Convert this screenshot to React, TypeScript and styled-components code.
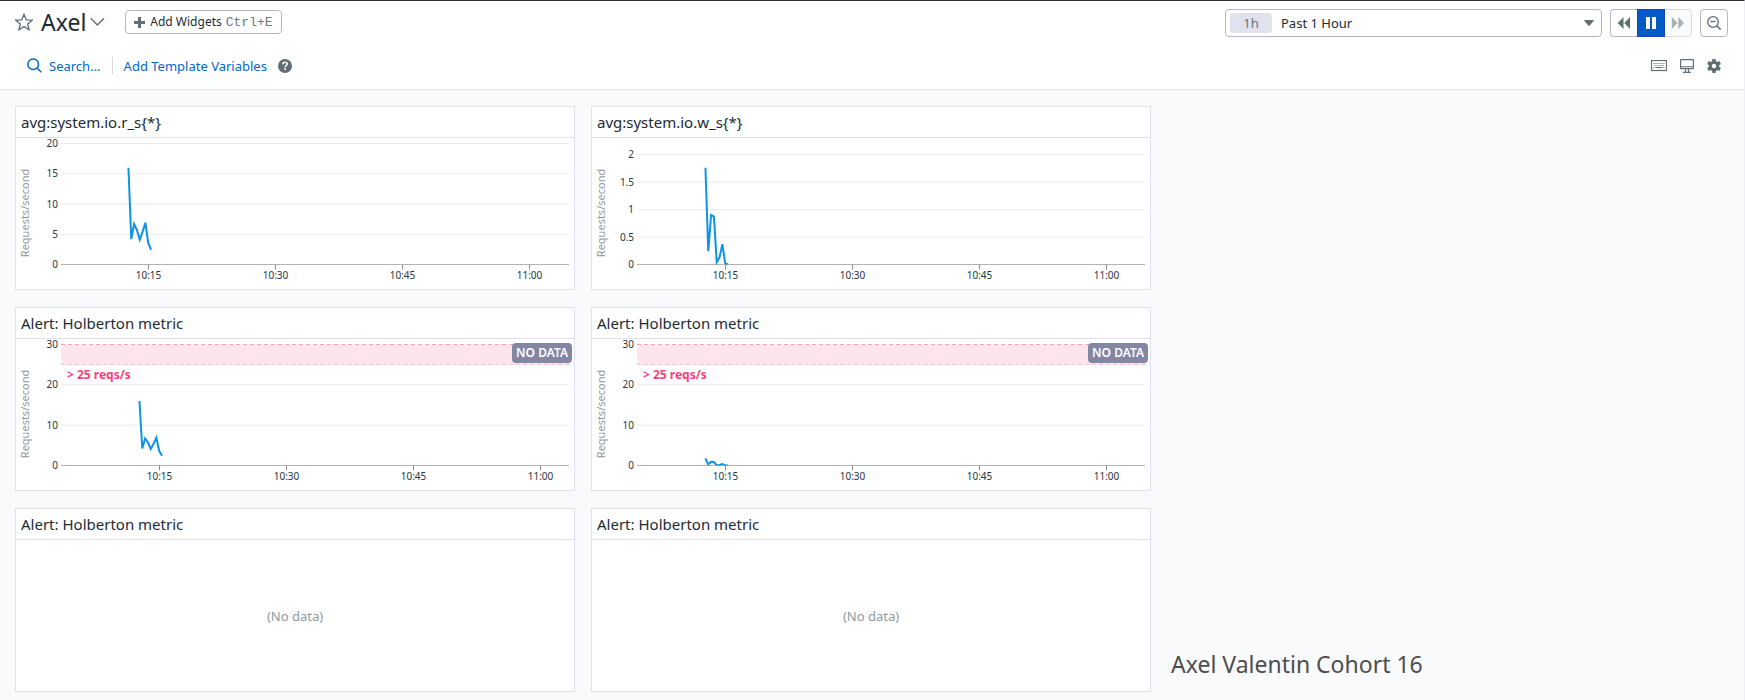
import React, { useId } from 'react';
import styled, { createGlobalStyle, css } from 'styled-components';

const GlobalStyle = createGlobalStyle`
  *, *::before, *::after { box-sizing: border-box; }
  body {
    margin: 0;
    background: #f9fafc;
    color: #1c2b34;
    font-family: 'Noto Sans', sans-serif;
    font-size: 13px;
    line-height: 20px;
  }
  button, select { font: inherit; color: inherit; }
`;

const Page = styled.div`
  min-height: 100vh;
  border-top: 1px solid #352f36;
  border-right: 1px solid #eeeef3;
`;

const Header = styled.header`
  background: #fff;
  border-bottom: 1px solid #e1e1ec;
`;

const Row = styled.div`
  display: flex;
  align-items: center;
  justify-content: space-between;
`;

const TitleRow = styled(Row)`
  height: 43px;
  padding: 0 16px 0 15px;
`;

const ToolRow = styled(Row)`
  height: 45px;
  padding: 0 23px 2px 27px;
`;

const Group = styled.div<{ $gap: number }>`
  display: flex;
  align-items: center;
  gap: ${({ $gap }) => $gap}px;
`;

const HeadingGroup = styled(Group)`
  padding-bottom: 1px;
`;

const Title = styled.h1`
  margin: 0;
  font-size: 23px;
  font-weight: 400;
  line-height: 30px;
`;

const PlainButton = styled.button`
  display: flex;
  align-items: center;
  padding: 0;
  border: 0;
  background: none;
  color: #5f6f75;
  cursor: pointer;
`;

const TitleMenu = styled.div`
  display: flex;
  align-items: center;
  gap: 4px;
`;

const AddWidgets = styled.button`
  display: flex;
  align-items: center;
  gap: 5px;
  height: 24px;
  margin-left: 12px;
  padding: 0 8px;
  border: 1px solid #b6b4cb;
  border-radius: 4px;
  background: #fff;
  font-size: 12px;
  line-height: 20px;
`;

const Shortcut = styled.kbd`
  padding-top: 1px;
  color: #6b797f;
  font-family: 'Liberation Mono', monospace;
  font-size: 13px;
`;

const Label = styled.span`
  display: flex;
  align-items: center;
  gap: 4px;
`;

const LinkButton = styled(PlainButton)`
  gap: 7px;
  color: #0069c8;
`;

const TextLink = styled.a`
  color: #0069c8;
  text-decoration: none;
`;

const Divider = styled.span`
  width: 1px;
  height: 17px;
  background: #d7d7e5;
`;

const TimeField = styled.div`
  display: flex;
  align-items: center;
  width: 377px;
  height: 28px;
  padding: 0 7px 0 4px;
  border: 1px solid #b6b4cb;
  border-radius: 4px;
  background: #fff;
`;

const TimeBadge = styled.label`
  width: 42px;
  height: 20px;
  border-radius: 4px;
  background: #e0e3ed;
  color: #66757b;
  text-align: center;
`;

const TimeSelect = styled.select`
  flex: 1;
  height: 26px;
  padding: 0 0 0 9px;
  border: 0;
  background: none;
  appearance: none;
`;

const ButtonStrip = styled.div`
  display: flex;
`;

const IconButton = styled.button<{ $kind?: 'active' | 'disabled' }>`
  display: flex;
  align-items: center;
  justify-content: center;
  width: 28px;
  height: 28px;
  padding: 0;
  border: 1px solid #b6b4cb;
  border-radius: 4px;
  background: #fff;
  color: #5f6f75;

  ${ButtonStrip} > & {
    width: 27px;
    border-radius: 4px 0 0 4px;
    border-right: 0;
  }

  ${({ $kind }) =>
    $kind === 'active' &&
    css`
      ${ButtonStrip} > & {
        width: 28px;
        border: 1px solid #1f3fc4;
        border-radius: 0;
        background: #005bc5;
        color: #fff;
      }
    `}

  ${({ $kind }) =>
    $kind === 'disabled' &&
    css`
      ${ButtonStrip} > & {
        border: 1px solid #dcdbe6;
        border-left: 0;
        border-radius: 0 4px 4px 0;
        background: #f9fafc;
        color: #aab2b5;
      }
    `}
`;

const Board = styled.main`
  display: grid;
  grid-template-columns: repeat(3, minmax(0, 1fr));
  gap: 17px 16px;
  padding: 16px 17px 8px 15px;
`;

const Card = styled.section<{ $column: number }>`
  display: flex;
  flex-direction: column;
  grid-column: ${({ $column }) => $column};
  min-height: 184px;
  border: 1px solid #e0e1ec;
  background: #fff;
`;

const CardTitle = styled.h2`
  margin: 0;
  padding: 4px 5px;
  border-bottom: 1px solid #e0e1ec;
  font-size: 15px;
  font-weight: 400;
  line-height: 22px;
`;

const CardBody = styled.div`
  position: relative;
  display: flex;
  flex: 1;
  align-items: center;
  justify-content: center;
`;

const EmptyText = styled.p`
  margin: 0;
  color: #8d999d;
`;

const StatusBadge = styled.span`
  position: absolute;
  top: 4px;
  right: 2px;
  width: 60px;
  border-radius: 4px;
  background: #8387a4;
  color: #fff;
  font-size: 12px;
  font-weight: 600;
  line-height: 20px;
  text-align: center;
`;

const Note = styled.p`
  grid-column: 3;
  align-self: end;
  margin: 0;
  padding: 0 4px 12px;
  color: #4d4d4d;
  font-size: 23px;
  line-height: 32px;
`;

const ChartSvg = styled.svg`
  display: block;
  width: 100%;
  height: 151px;
  overflow: visible;
`;

const Plot = styled.svg`
  width: calc(100% - 50px);
  overflow: visible;
`;

const AxisText = styled.text`
  fill: #27363e;
  font-size: 10px;
`;

const UnitText = styled.text`
  fill: #8d999d;
  font-size: 11px;
`;

const ThresholdText = styled.text`
  fill: #fa3f7c;
  font-size: 12px;
  font-weight: 700;
`;

const StarIcon = () => (
  <svg width="18" height="18" viewBox="0 0 18 18" fill="none" stroke="#5f6f75" strokeWidth="1.3" strokeLinejoin="miter">
    <path d="M9 1.2l2.2 5.6 6 .4-4.600 3.800 1.500 5.800L9 13.600l-5.100 3.200L5.400 11 .8 7.200l6-.4z" />
  </svg>
);

const ChevronIcon = () => (
  <svg width="15" height="10" viewBox="0 0 15 10" fill="none" stroke="#5f6f75" strokeWidth="1.4">
    <path d="M.8 1.3l6.6 6.8 6.6-6.8" />
  </svg>
);

const PlusIcon = () => (
  <svg width="11" height="11" viewBox="0 0 11 11" fill="#5f6f75">
    <path d="M4 0h3v4h4v3H7v4H4V7H0V4h4z" />
  </svg>
);

const SearchIcon = () => (
  <svg width="15" height="15" viewBox="0 0 15 15" fill="none" stroke="#0069c8" strokeWidth="1.5">
    <circle cx="6.2" cy="6.2" r="5.3" />
    <path d="M10 10l4.300 4.300" />
  </svg>
);

const HelpIcon = () => (
  <svg width="14" height="14" viewBox="0 0 14 14">
    <circle cx="7" cy="7" r="7" fill="#5f6f75" />
    <path d="M4.9 5.3c.1-1.3 1-2 2.2-2s2.1.7 2.1 1.8c0 1.5-2.1 1.5-2.1 3.1" fill="none" stroke="#fff" strokeWidth="1.6" />
    <rect x="6.2" y="9.2" width="1.8" height="1.8" fill="#fff" />
  </svg>
);

const CaretIcon = () => (
  <svg width="10" height="6" viewBox="0 0 10 6" fill="#5f6f75">
    <path d="M.3 0h9.4v.8L5.9 5.2a1.2 1.2 0 0 1-1.8 0L.3.8z" />
  </svg>
);

const RewindIcon = () => (
  <svg width="14" height="12" viewBox="0 0 14 12" fill="currentColor">
    <path d="M6.5 0v12L.8 6zM13 0v12L7.2 6z" />
  </svg>
);

const ForwardIcon = () => (
  <svg width="14" height="12" viewBox="0 0 14 12" fill="currentColor">
    <path d="M.8 0v12L6.6 6zM7.3 0v12L13 6z" />
  </svg>
);

const PauseIcon = () => (
  <svg width="12" height="12" viewBox="0 0 12 12" fill="currentColor">
    <path d="M1 0h4v12H1zM7 0h4v12H7z" />
  </svg>
);

const ZoomOutIcon = () => (
  <svg width="14" height="14" viewBox="0 0 14 14" fill="none" stroke="currentColor" strokeWidth="1.3">
    <circle cx="6" cy="6" r="5.3" />
    <path d="M3.4 5.5h5.2" />
    <path d="M9.8 9.8l3.8 3.8" strokeWidth="1.6" />
  </svg>
);

const KeyboardIcon = () => (
  <svg width="16" height="12" viewBox="0 0 16 12" fill="none" stroke="#5f6f75">
    <rect x=".5" y=".5" width="15" height="10" strokeWidth="1.2" />
    <path d="M2.500 3.500h11M3.500 5.500h9.500" strokeDasharray="1 1" />
    <path d="M2.500 7.500h1M4.500 7.500h7M12.500 7.500h1" />
  </svg>
);

const MonitorIcon = () => (
  <svg width="14" height="14" viewBox="0 0 14 14" fill="none" stroke="#5f6f75">
    <path d="M1 7h12v2.500H1z" fill="#d3d8da" stroke="none" />
    <rect x=".6" y=".6" width="12.800" height="9" rx=".6" strokeWidth="1.2" />
    <path d="M1 7.500h12" strokeWidth=".7" />
    <path d="M5.500 10v3M8.500 10v3M3 13.300h8" strokeWidth="1.200" />
  </svg>
);

const GearIcon = () => (
  <svg width="14" height="14" viewBox="0 0 14 14">
    <g fill="#5f6f75">
      <circle cx="7" cy="7" r="5.200" />
      {[0, 60, 120].map((angle) => (
        <path key={angle} d="M5.400 0h3.200l.5 3v8l-.5 3H5.400l-.5-3V3z" transform={`rotate(${angle} 7 7)`} />
      ))}
    </g>
    <circle cx="7" cy="7" r="2.200" fill="#fff" />
  </svg>
);

const PLOT_WIDTH = 508;
const PLOT_HEIGHT = 121;
const QUARTER = 127;
const STEP = QUARTER / 45;

const TIMES = ['10:15', '10:30', '10:45', '11:00'];
const READS = [16, 4.2, 6.7, 5.7, 4.1, 5.4, 6.9, 3.6, 2.4];
const WRITES = [1.76, 0.24, 0.9, 0.87, 0.04, 0.13, 0.37, 0.02, 0];

type ChartProps = {
  values: number[];
  max: number;
  ticks: number[];
  firstTick: number;
  threshold?: number;
};

const Chart = ({ values, max, ticks, firstTick, threshold }: ChartProps) => {
  const y = (value: number) => PLOT_HEIGHT - (value / max) * PLOT_HEIGHT;
  const percent = (x: number) => `${(x / PLOT_WIDTH) * 100}%`;
  const points = values
    .map((value, i) => `${firstTick + (i - 7) * STEP - 0.3},${y(value)}`)
    .join(' ');

  return (
    <ChartSvg role="img" aria-label="Requests per second">
      <UnitText transform="translate(13 75) rotate(-90)" textAnchor="middle">
        Requests/second
      </UnitText>
      {ticks.map((tick) => (
        <AxisText key={tick} x="42" y={y(tick) + 9} textAnchor="end">
          {tick}
        </AxisText>
      ))}
      <Plot x="45" y="5.5" height={PLOT_HEIGHT}>
        {threshold !== undefined && (
          <rect width="100%" height={y(threshold)} fill="#fee5eb" />
        )}
        {ticks
          .filter((tick) => tick > 0 && !(threshold !== undefined && tick > threshold))
          .map((tick) => (
            <line key={tick} x1="0" x2="100%" y1={y(tick)} y2={y(tick)} stroke="#ebebee" />
          ))}
        {threshold !== undefined &&
          [max, threshold].map((level, i) => (
            <line
              key={level}
              x1="0"
              x2="100%"
              y1={Math.round(y(level))}
              y2={Math.round(y(level))}
              stroke={i === 0 ? '#fba3bd' : '#fdbccf'}
              strokeDasharray="4 3"
            />
          ))}
        <line x1="0" x2="100%" y1={PLOT_HEIGHT} y2={PLOT_HEIGHT} stroke="#b3b3b5" />
        {TIMES.map((time, i) => {
          const x = percent(firstTick + i * QUARTER);
          return (
            <g key={time}>
              <line x1={x} x2={x} y1={PLOT_HEIGHT} y2={PLOT_HEIGHT + 5} stroke="#8d9093" />
              <AxisText x={x} y={PLOT_HEIGHT + 14} textAnchor="middle">
                {time}
              </AxisText>
            </g>
          );
        })}
        <svg
          width="100%"
          height={PLOT_HEIGHT}
          viewBox={`0 0 ${PLOT_WIDTH} ${PLOT_HEIGHT}`}
          preserveAspectRatio="none"
        >
          <polyline
            points={points}
            fill="none"
            stroke="#0d92ec"
            strokeWidth="2"
            vectorEffect="non-scaling-stroke"
          />
        </svg>
        {threshold !== undefined && (
          <ThresholdText x="6" y={y(threshold) + 14}>
            {`> ${threshold} reqs/s`}
          </ThresholdText>
        )}
      </Plot>
    </ChartSvg>
  );
};

type Widget = { title: string; column: number; chart?: ChartProps };

const WIDGETS: Widget[] = [
  {
    title: 'avg:system.io.r_s{*}',
    column: 1,
    chart: { values: READS, max: 20, ticks: [0, 5, 10, 15, 20], firstTick: 87.5 },
  },
  {
    title: 'avg:system.io.w_s{*}',
    column: 2,
    chart: { values: WRITES, max: 2.2, ticks: [0, 0.5, 1, 1.5, 2], firstTick: 88.5 },
  },
  {
    title: 'Alert: Holberton metric',
    column: 1,
    chart: { values: READS, max: 30, ticks: [0, 10, 20, 30], firstTick: 98.5, threshold: 25 },
  },
  {
    title: 'Alert: Holberton metric',
    column: 2,
    chart: { values: WRITES, max: 30, ticks: [0, 10, 20, 30], firstTick: 88.5, threshold: 25 },
  },
  { title: 'Alert: Holberton metric', column: 1 },
  { title: 'Alert: Holberton metric', column: 2 },
];

export default function App() {
  const rangeId = useId();

  return (
    <>
      <GlobalStyle />
      <Page>
        <Header>
          <TitleRow>
            <HeadingGroup $gap={8}>
              <PlainButton aria-label="Favorite">
                <StarIcon />
              </PlainButton>
              <TitleMenu>
                <Title>Axel</Title>
                <PlainButton aria-label="Dashboard menu">
                  <ChevronIcon />
                </PlainButton>
              </TitleMenu>
              <AddWidgets>
                <PlusIcon />
                <Label>
                  Add Widgets <Shortcut>Ctrl+E</Shortcut>
                </Label>
              </AddWidgets>
            </HeadingGroup>
            <Group $gap={8}>
              <TimeField>
                <TimeBadge htmlFor={rangeId}>1h</TimeBadge>
                <TimeSelect id={rangeId} defaultValue="1h">
                  <option value="1h">Past 1 Hour</option>
                </TimeSelect>
                <CaretIcon />
              </TimeField>
              <ButtonStrip>
                <IconButton aria-label="Back">
                  <RewindIcon />
                </IconButton>
                <IconButton $kind="active" aria-label="Pause">
                  <PauseIcon />
                </IconButton>
                <IconButton $kind="disabled" disabled aria-label="Forward">
                  <ForwardIcon />
                </IconButton>
              </ButtonStrip>
              <IconButton aria-label="Zoom out">
                <ZoomOutIcon />
              </IconButton>
            </Group>
          </TitleRow>
          <ToolRow>
            <Group $gap={11}>
              <LinkButton>
                <SearchIcon />
                Search...
              </LinkButton>
              <Divider />
              <TextLink href="#variables">Add Template Variables</TextLink>
              <PlainButton aria-label="Help">
                <HelpIcon />
              </PlainButton>
            </Group>
            <Group $gap={13}>
              <PlainButton aria-label="Keyboard shortcuts">
                <KeyboardIcon />
              </PlainButton>
              <PlainButton aria-label="TV mode">
                <MonitorIcon />
              </PlainButton>
              <PlainButton aria-label="Settings">
                <GearIcon />
              </PlainButton>
            </Group>
          </ToolRow>
        </Header>
        <Board>
          {WIDGETS.map((widget, i) => (
            <Card key={i} $column={widget.column}>
              <CardTitle>{widget.title}</CardTitle>
              <CardBody>
                {widget.chart ? <Chart {...widget.chart} /> : <EmptyText>(No data)</EmptyText>}
                {widget.chart?.threshold !== undefined && <StatusBadge>NO DATA</StatusBadge>}
              </CardBody>
            </Card>
          ))}
          <Note>Axel Valentin Cohort 16</Note>
        </Board>
      </Page>
    </>
  );
}
